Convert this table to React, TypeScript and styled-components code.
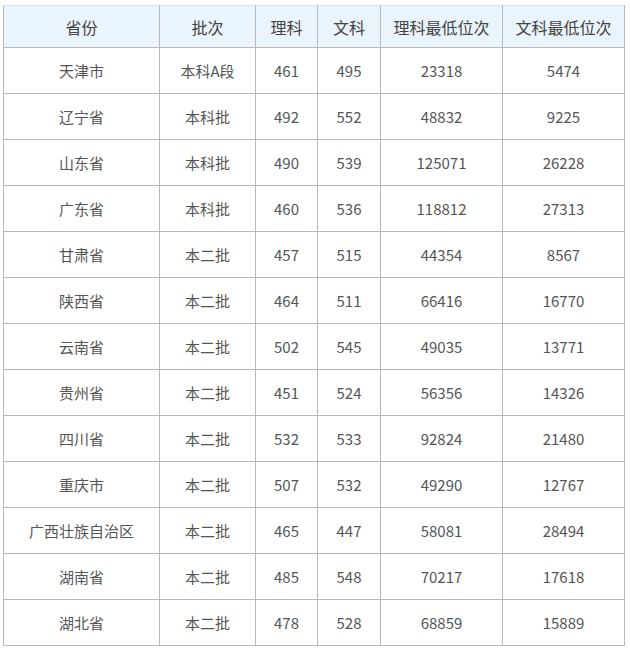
import * as React from 'react';
import styled, {createGlobalStyle} from 'styled-components';

const GlobalStyle = createGlobalStyle`
    html, body {
        margin: 0;
        padding: 0;
        background: #ffffff;
        font-family: "Noto Sans CJK SC", "Noto Sans", sans-serif;
    }
`;

const Page = styled.div`
    padding: 5px 0 0 3px;
`;

const Table = styled.table`
    border-collapse: collapse;
    table-layout: fixed;
    width: 621px;
`;

const HeadCell = styled.th`
    height: 41px;
    padding: 0;
    background: #eaf4fc;
    border: 1px solid #b9b9b9;
    border-top-color: #d6e6f2;
    color: #444444;
    font-size: 16px;
    font-weight: 400;
    text-align: center;
    vertical-align: middle;
`;

const Cell = styled.td`
    height: 45px;
    padding: 0;
    border: 1px solid #b9b9b9;
    color: #555555;
    font-size: 15px;
    text-align: center;
    vertical-align: middle;
`;

const columns = [
    {title: '省份', width: 156},
    {title: '批次', width: 96},
    {title: '理科', width: 62},
    {title: '文科', width: 63},
    {title: '理科最低位次', width: 122},
    {title: '文科最低位次', width: 122},
];

const rows: string[][] = [
    ['天津市', '本科A段', '461', '495', '23318', '5474'],
    ['辽宁省', '本科批', '492', '552', '48832', '9225'],
    ['山东省', '本科批', '490', '539', '125071', '26228'],
    ['广东省', '本科批', '460', '536', '118812', '27313'],
    ['甘肃省', '本二批', '457', '515', '44354', '8567'],
    ['陕西省', '本二批', '464', '511', '66416', '16770'],
    ['云南省', '本二批', '502', '545', '49035', '13771'],
    ['贵州省', '本二批', '451', '524', '56356', '14326'],
    ['四川省', '本二批', '532', '533', '92824', '21480'],
    ['重庆市', '本二批', '507', '532', '49290', '12767'],
    ['广西壮族自治区', '本二批', '465', '447', '58081', '28494'],
    ['湖南省', '本二批', '485', '548', '70217', '17618'],
    ['湖北省', '本二批', '478', '528', '68859', '15889'],
];

const App: React.FC = () => {
    return (
        <Page>
            <GlobalStyle />
            <Table>
                <colgroup>
                    {columns.map((c) => (
                        <col key={c.title} style={{width: c.width}} />
                    ))}
                </colgroup>
                <thead>
                    <tr>
                        {columns.map((c) => (
                            <HeadCell key={c.title}>{c.title}</HeadCell>
                        ))}
                    </tr>
                </thead>
                <tbody>
                    {rows.map((row) => (
                        <tr key={row[0]}>
                            {row.map((value, i) => (
                                <Cell key={i}>{value}</Cell>
                            ))}
                        </tr>
                    ))}
                </tbody>
            </Table>
        </Page>
    );
};

export default App;
